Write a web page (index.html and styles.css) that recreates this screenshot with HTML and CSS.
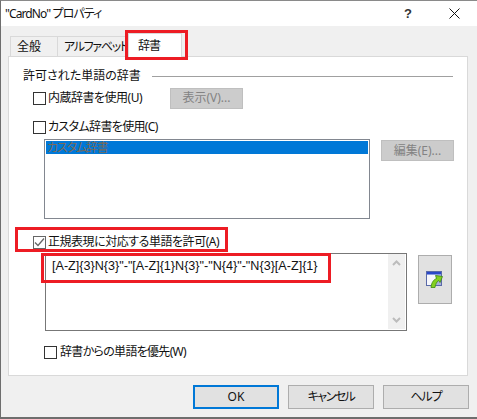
FILE: index.html
```html
<!DOCTYPE html>
<html lang="ja">
<head>
<meta charset="utf-8">
<title>"CardNo" プロパティ</title>
<link rel="stylesheet" href="styles.css">
</head>
<body>
<div class="window">
  <header class="titlebar">
    <span class="title">"CardNo" プロパティ</span>
    <span class="help-q">?</span>
    <svg class="close" width="11" height="11" viewBox="0 0 11 11"><path d="M.5.5l10 10M10.500.5l-10 10" stroke="#111" fill="none"/></svg>
  </header>
  <div class="client">
    <div class="tabs">
      <div class="tab tab-general">全般</div>
      <div class="tab tab-alpha">アルファベット</div>
      <div class="tab tab-active">辞書</div>
    </div>
    <div class="panel">
      <div class="legend"><span>許可された単語の辞書</span><i class="legend-line"></i></div>
      <div class="row row-builtin">
        <label class="check"><span class="box"></span>内蔵辞書を使用(U)</label>
        <button class="btn btn-show">表示(V)...</button>
      </div>
      <div class="row row-custom">
        <label class="check"><span class="box"></span>カスタム辞書を使用(C)</label>
      </div>
      <div class="row-list">
        <div class="listbox"><div class="list-item">カスタム辞書</div></div>
        <button class="btn btn-edit">編集(E)...</button>
      </div>
      <div class="row row-regex">
        <label class="check"><span class="box"><svg width="11" height="11" viewBox="0 0 11 11"><path d="M1 5.500l3 3 6-7" stroke="#666" stroke-width="1.300" fill="none"/></svg></span>正規表現に対応する単語を許可(A)</label>
      </div>
      <div class="row-expr">
        <div class="textbox">
          <div class="expr">[A-Z]{3}N{3}"-"[A-Z]{1}N{3}"-"N{4}"-"N{3}[A-Z]{1}</div>
          <div class="scrollbar">
            <svg width="9" height="6" viewBox="0 0 9 6"><path d="M1 5l3.500-3.500L8 5" stroke="#bcbcbc" stroke-width="2" fill="none"/></svg>
            <svg width="9" height="6" viewBox="0 0 9 6"><path d="M1 1l3.500 3.500L8 1" stroke="#bcbcbc" stroke-width="2" fill="none"/></svg>
          </div>
        </div>
        <button class="btn btn-icon">
          <svg width="18" height="17" viewBox="0 0 18 17">
            <rect x=".5" y=".5" width="15" height="14" fill="#e8ecf8" stroke="#5a6aa8"/>
            <rect x="1" y="1" width="14" height="2.500" fill="#2a48c8"/>
            <rect x="1" y="4" width="14" height="10" fill="#f6f7fc"/>
            <rect x="10" y="4" width="5" height="10" fill="#aab0dc"/>
            <path d="M5 16.500C5.500 11 8 8.500 10.500 7.500L9.500 4.500 16.500 5.500 14 11.500 12.500 9.500C10.500 11 9.500 13.500 9 16.500z" fill="#84d020" stroke="#3c8a10" stroke-width=".8"/>
          </svg>
        </button>
      </div>
      <div class="row row-prefer">
        <label class="check"><span class="box"></span>辞書からの単語を優先(W)</label>
      </div>
    </div>
    <div class="actions">
      <button class="btn action action-default">OK</button>
      <button class="btn action action-cancel">キャンセル</button>
      <button class="btn action action-help">ヘルプ</button>
    </div>
  </div>
  <div class="mark mark-tab"></div>
  <div class="mark mark-check"></div>
  <div class="mark mark-expr"></div>
</div>
</body>
</html>
```

FILE: styles.css
```css
* { box-sizing: border-box; }
html, body { margin: 0; padding: 0; }
body { width: 477px; height: 419px; overflow: hidden; background: #fff; }
.window {
  position: relative;
  width: 477px;
  height: 419px;
  display: flex;
  flex-direction: column;
  border-top: 1px solid #8a8a8a;
  border-left: 1px solid #6e6e6e;
  border-bottom: 2px solid #6e6e6e;
  font: 12px/16px "Noto Sans", "Noto Sans CJK JP", sans-serif;
  font-feature-settings: "palt";
  color: #111;
  background: #f0f0f0;
}
.titlebar {
  height: 25px;
  flex: none;
  display: flex;
  align-items: center;
  background: #fff;
  padding-left: 4px;
}
.title { letter-spacing: -0.9px; }
.help-q { margin-left: auto; margin-right: 37px; font: bold 13px "Liberation Sans", sans-serif; color: #333; }
.close { margin-right: 17px; }
.client { flex: 1; display: flex; flex-direction: column; padding: 7px 8px 0 7px; min-height: 0; }
.tabs { display: flex; height: 23px; flex: none; align-items: flex-end; padding-left: 2px; }
.tab {
  height: 20px;
  border: 1px solid #d9d9d9;
  border-bottom: 0;
  background: #f0f0f0;
  display: flex;
  align-items: center;
  white-space: nowrap;
}
.tab-general { width: 48px; padding-left: 6px; }
.tab-alpha { width: 69px; margin-left: -1px; padding-left: 6px; letter-spacing: -1.3px; }
.tab-active {
  width: 54px;
  height: 24px;
  margin-bottom: -1px;
  margin-left: 2px;
  background: #fff;
  position: relative;
  z-index: 1;
  padding-left: 9px;
  letter-spacing: -1px;
}
.panel {
  width: 460px;
  height: 320px;
  flex: none;
  background: #fff;
  border: 1px solid #d9d9d9;
  padding: 11px 0 0 14px;
  display: flex;
  flex-direction: column;
}
.legend { display: flex; align-items: center; height: 16px; }
.legend-line { flex: 1; margin: 0 14px 0 11px; border-top: 1px solid #a0a0a0; }
.row { display: flex; align-items: center; }
.check { display: flex; align-items: center; white-space: nowrap; }
.box {
  width: 13px;
  height: 13px;
  flex: none;
  border: 1px solid #333;
  background: #fff;
  margin-right: 2px;
  display: flex;
}
.btn {
  font: inherit;
  font-feature-settings: inherit;
  color: #111;
  background: #e1e1e1;
  border: 1px solid #adadad;
  padding: 0;
  display: flex;
  align-items: center;
  justify-content: center;
}
.row-builtin { height: 20px; margin: 4px 0 0 10px; letter-spacing: -0.5px; }
.btn-show, .btn-edit {
  width: 73px;
  height: 21px;
  background: #ccc;
  border-color: #bfbfbf;
  color: #838383;
  flex: none;
  letter-spacing: 0;
}
.btn-show { margin-left: auto; margin-right: 224px; }
.row-custom { height: 16px; margin: 11px 0 0 10px; letter-spacing: -0.65px; }
.row-list { display: flex; margin: 4px 0 0 21px; align-items: flex-start; }
.listbox { width: 326px; height: 80px; border: 1px solid #828790; padding: 1px; background: #fff; }
.list-item { height: 13px; line-height: 13px; background: #0078d7; color: #7a6a5a; padding-left: 1px; letter-spacing: -1.2px; }
.btn-edit { margin: 1px 0 0 11px; }
.row-regex { height: 16px; margin: 15px 0 0 10px; letter-spacing: -0.47px; }
.row-regex .box { border-color: #666; }
.row-expr { display: flex; margin: 3px 0 0 22px; align-items: flex-start; }
.textbox {
  width: 362px;
  height: 78px;
  border: 1px solid #777;
  background: #fff;
  display: flex;
  justify-content: space-between;
}
.expr { padding: 4px 0 0 6px; font-family: "Liberation Sans", sans-serif; font-size: 12.600px; white-space: nowrap; }
.scrollbar {
  width: 17px;
  margin: 0 1px 1px 0;
  background: #f0f0f0;
  display: flex;
  flex-direction: column;
  justify-content: space-between;
  align-items: center;
  padding: 6px 0;
}
.btn-icon { width: 34px; height: 49px; margin: 2px 0 0 11px; background: #e1e1e1; }
.row-prefer { height: 16px; margin: 13px 0 0 21px; letter-spacing: -0.7px; }
.row-prefer .box { margin-right: 3px; }
.actions { display: flex; margin-top: 9px; padding-left: 185px; gap: 9px; align-items: flex-start; }
.action { width: 86px; height: 24px; }
.action-default { border: 2px solid #0078d7; }
.action-cancel { letter-spacing: -1.5px; }
.action-help { letter-spacing: -1px; }
.mark { position: absolute; border: 3px solid #ed1c24; pointer-events: none; z-index: 2; }
.mark-tab { left: 124px; top: 29px; width: 63px; height: 30px; }
.mark-check { left: 14px; top: 226px; width: 213px; height: 25px; }
.mark-expr { left: 40px; top: 252px; width: 290px; height: 30px; }
```
